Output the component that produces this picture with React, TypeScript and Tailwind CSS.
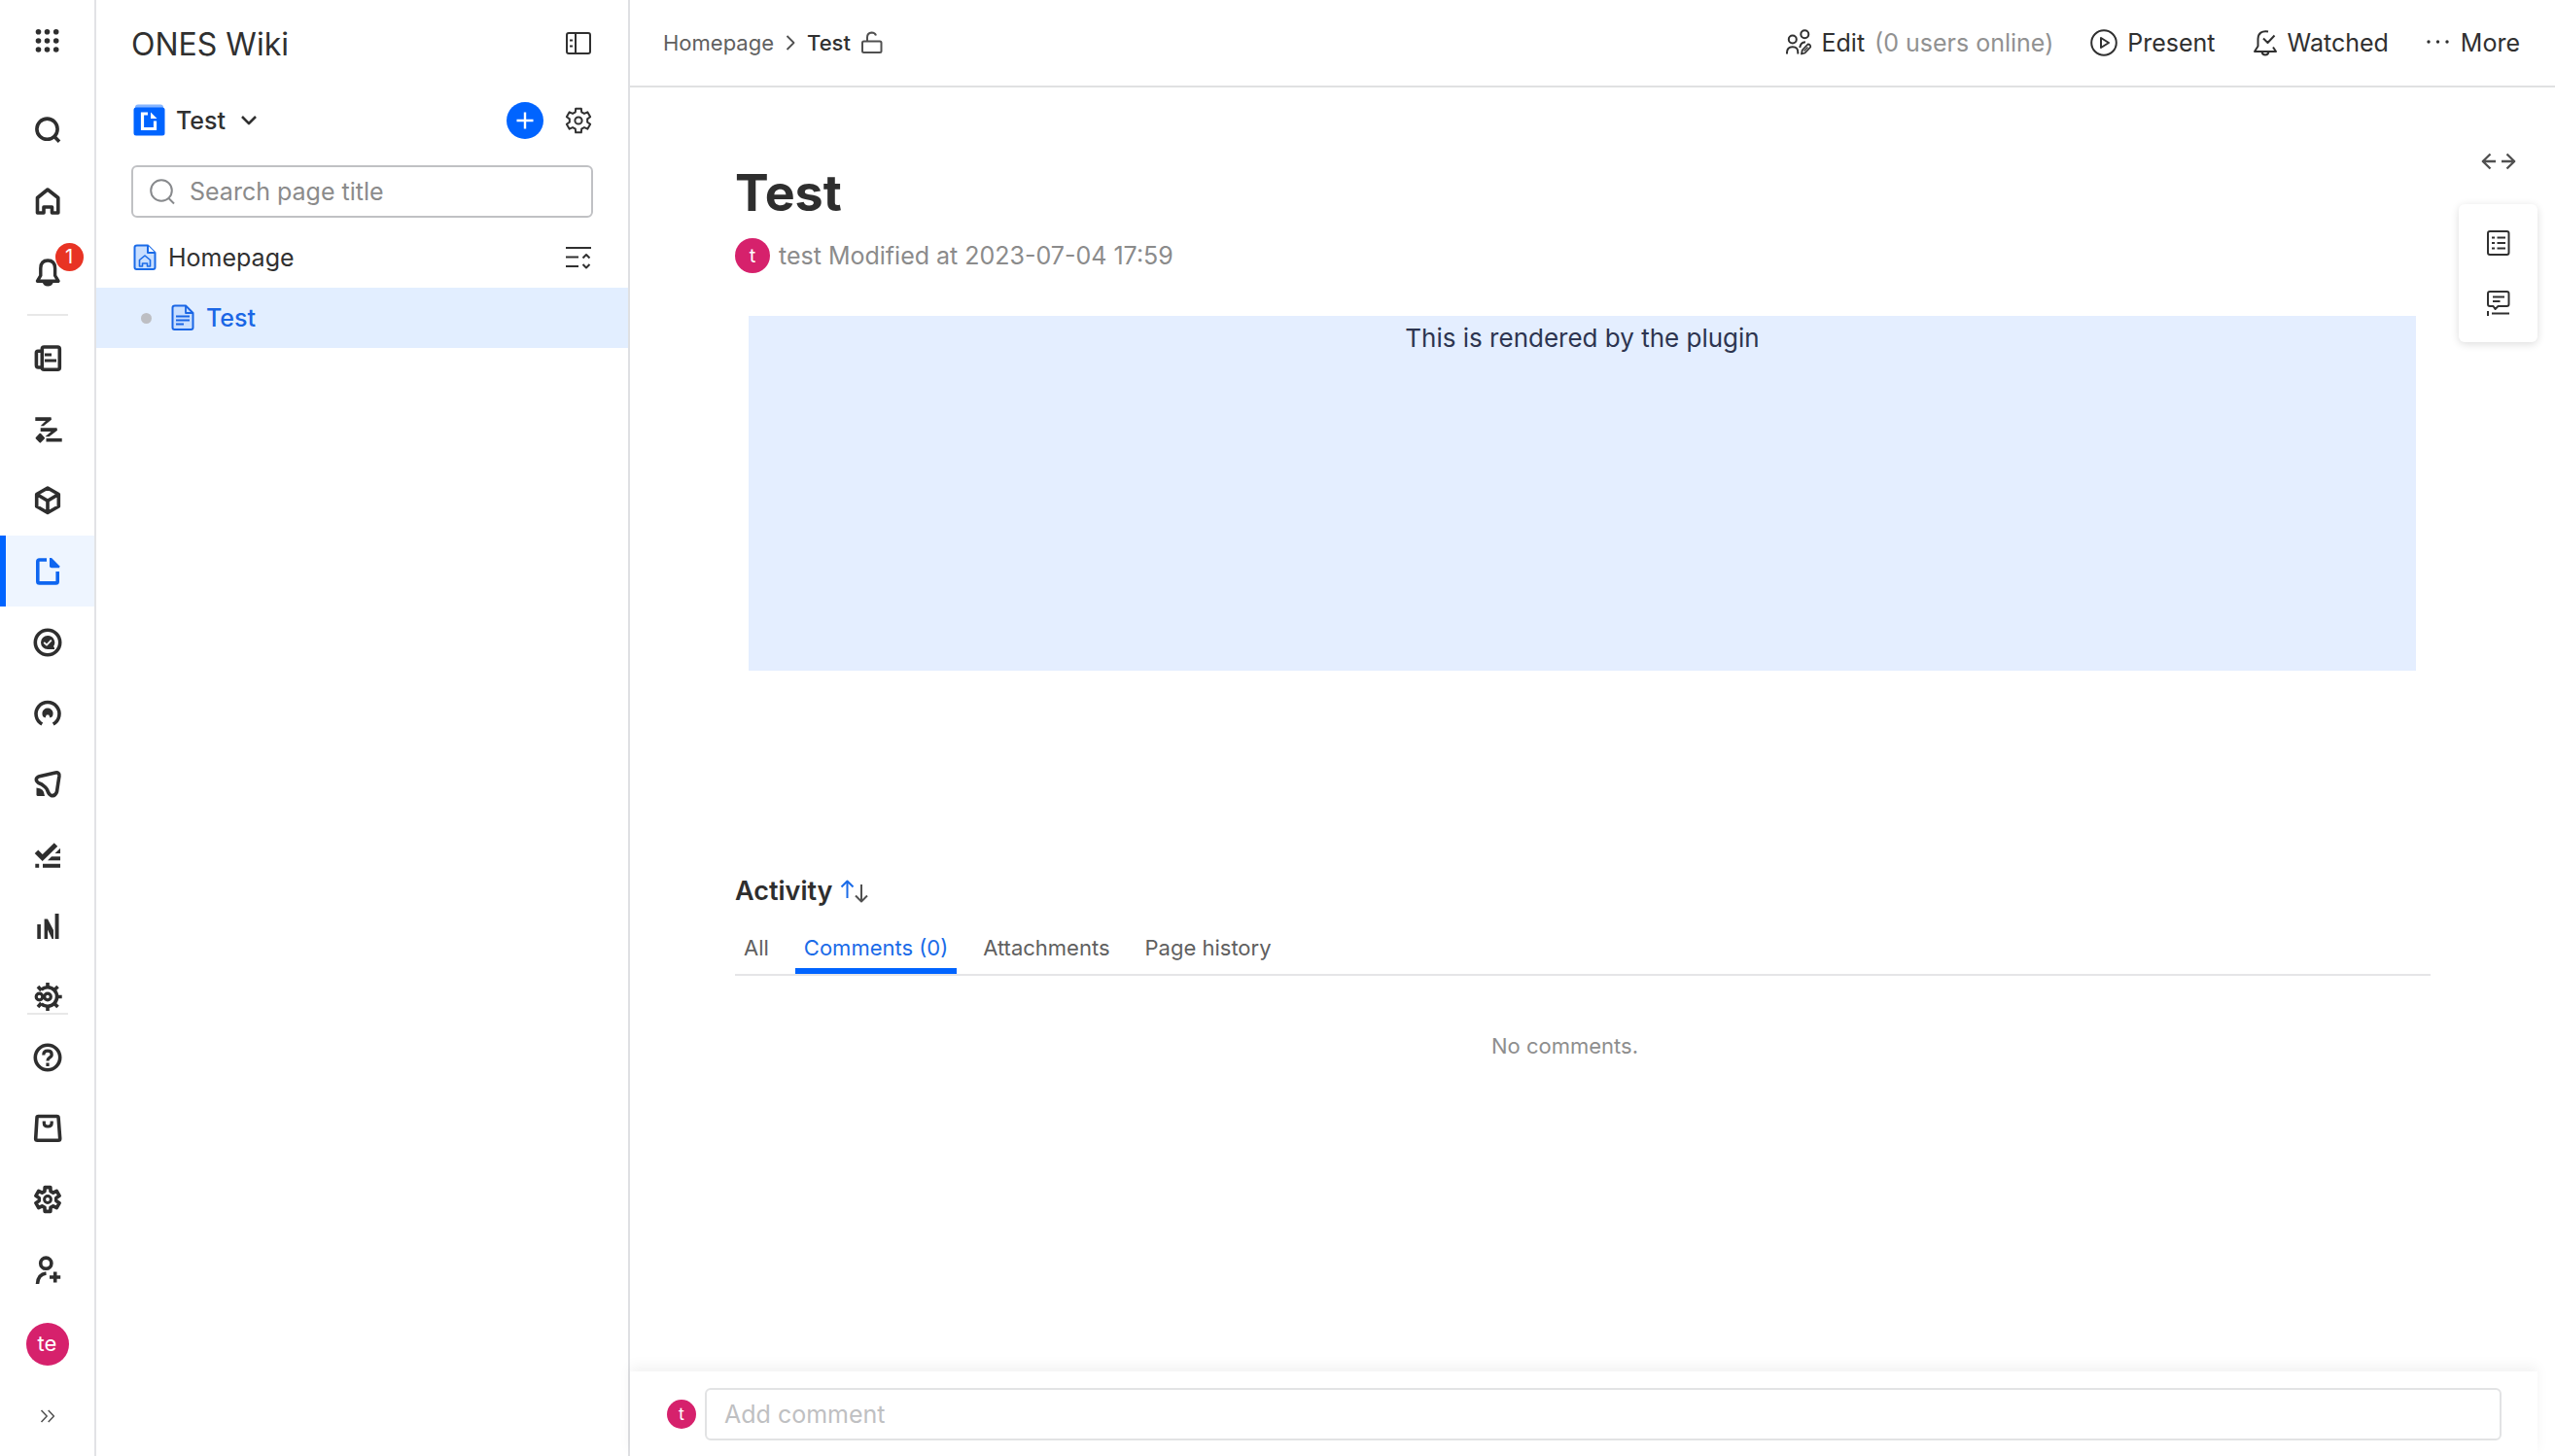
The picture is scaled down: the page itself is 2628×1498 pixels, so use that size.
import React from "react";

type IconProps = { children: React.ReactNode; w?: number; h?: number; sw?: number; className?: string };

function Icon({ children, w = 32, h = 32, sw = 3.6, className }: IconProps) {
  return (
    <svg
      width={w}
      height={h}
      viewBox={`0 0 ${w} ${h}`}
      fill="none"
      stroke="currentColor"
      strokeWidth={sw}
      strokeLinejoin="round"
      aria-hidden="true"
      className={className ?? "shrink-0"}
    >
      {children}
    </svg>
  );
}

function gearPath(c: number, outer: number, inner: number) {
  const pts: string[] = [];
  for (let i = 0; i < 6; i++) {
    const mid = -90 + i * 60;
    const steps: [number, number][] = [
      [-20, inner],
      [-13, outer],
      [13, outer],
      [20, inner],
    ];
    for (const [offset, radius] of steps) {
      const a = ((mid + offset) * Math.PI) / 180;
      pts.push(`${(c + radius * Math.cos(a)).toFixed(2)} ${(c + radius * Math.sin(a)).toFixed(2)}`);
    }
  }
  return `M${pts.join("L")}Z`;
}

const solid = { fill: "currentColor", stroke: "none" } as const;

const appIcons: { label: string; active?: boolean; art: React.ReactNode }[] = [
  {
    label: "Projects",
    art: (
      <>
        <rect x="10.3" y="4" width="18" height="23.2" rx="2" />
        <path d="M10 8.2H6Q4.4 8.2 4.4 10V22.5Q4.4 25 6.5 25H10" />
        <path d="M13 12H20M13 18H25" strokeWidth="3" />
      </>
    ),
  },
  {
    label: "Plan",
    art: (
      <>
        <path
          d="M3.3 3.3H19.5L20 5.8L11.8 12.3H8.7L14 7H3.3ZM8.7 14.2H25.5L26 16.7L17.5 23.2H13.5L19.5 18H8.7ZM14.5 25H30.7V28.6H14.5Z"
          {...solid}
        />
        <path d="M8.3 20.8L12 24.7L8.3 28.6L4.6 24.7Z" fill="currentColor" strokeWidth="2" />
      </>
    ),
  },
  {
    label: "Product",
    art: <path d="M16 3L27.3 9.5V22L16 28.5L4.7 22V9.5ZM4.7 9.5L16 16.2L27.3 9.5M16 16.2V28" />,
  },
  {
    label: "Wiki",
    active: true,
    art: (
      <>
        <path d="M15 4H7.5Q5.8 4 5.8 5.7V26.2Q5.8 27.9 7.5 27.9H24.5Q26.2 27.9 26.2 26.2V16" />
        <path d="M18 2H20L28.2 10.2V12.3H20Q18 12.3 18 10.3Z" {...solid} />
      </>
    ),
  },
  {
    label: "Test cases",
    art: (
      <>
        <circle cx="16" cy="16" r="12.7" />
        <path d="M16 9A7 7 0 1 0 16 23H23V21.5L22 20A7 7 0 0 0 16 9Z" {...solid} />
        <path d="M12.2 16L15 18.6L19.8 13.6" stroke="white" strokeWidth="1.8" />
      </>
    ),
  },
  {
    label: "Performance",
    art: (
      <>
        <path d="M10.3 27A12 12 0 1 1 21.7 27" />
        <path d="M11.5 19.5A5.6 5.6 0 1 1 20.5 19.5L18.5 20.5L17.2 17.5H14.8L13.5 20.5Z" {...solid} />
      </>
    ),
  },
  {
    label: "Desk",
    art: (
      <>
        <path d="M7.5 7.8L24 4Q28.3 3.3 27.9 7.5L25.5 23.5Q24 28.5 19.5 27.5Q17.5 26.5 16.5 24Q15 19.5 12.5 18Q10 15.5 6.5 14.5Q3 11.5 5 9.2Q6 8.2 7.5 7.8Z" />
        <path d="M4.5 19.5Q12.5 19.8 13 28H6Q4.5 28 4.5 26.5Z" {...solid} />
      </>
    ),
  },
  {
    label: "Tasks",
    art: (
      <>
        <path d="M4.5 12.2L10.7 18.5L24.5 5" strokeWidth="5" strokeLinejoin="miter" />
        <path d="M29 8.7V14H23.5ZM20 17.3H29V21.3H16ZM3.3 24.7H7.2V28.7H3.3ZM11 24.7H29V28.7H11Z" {...solid} />
      </>
    ),
  },
  {
    label: "Reports",
    art: (
      <path
        d="M5.3 14H8.9V29H5.3ZM23.6 3H27.5V29H23.6ZM12.6 8.5H16L22 20V29H20.5L16 19.5V29H12.6Z"
        {...solid}
      />
    ),
  },
  {
    label: "Automation",
    art: (
      <>
        <circle cx="7.5" cy="15.5" r="3.3" strokeWidth="3.2" />
        <circle cx="16" cy="15.5" r="3.3" strokeWidth="3.2" />
        <path d="M9.5 8.2A9.7 9.7 0 1 1 9.5 22.8" />
        <path d="M16 1V6M16 25V30M25 15.5H30.7M22.5 9L26.5 5M22.5 22L26.5 26M9.5 9L6 5M9.5 22L6 26" />
      </>
    ),
  },
];

const footerIcons: { label: string; art: React.ReactNode }[] = [
  {
    label: "Help",
    art: (
      <>
        <circle cx="16" cy="16" r="12.7" />
        <path d="M11.8 13.5Q11.8 9.2 16 9.2T20.2 13Q20.2 15 17.5 16.5Q16 17.5 16 19.5M16 21.5V25" strokeWidth="3.2" />
      </>
    ),
  },
  {
    label: "Marketplace",
    art: (
      <>
        <path d="M6.5 3.5H25.5Q27 3.5 27.1 5L28.7 26.5Q28.7 28.3 27 28.3H5.5Q3.7 28.3 3.7 26.5L5 5Q5 3.5 6.5 3.5Z" />
        <path d="M12.3 8.5V10.5Q12.3 14 16.2 14T20.2 10.5V8.5" strokeWidth="3.2" />
      </>
    ),
  },
  {
    label: "Settings",
    art: (
      <>
        <path d={gearPath(16, 12.7, 8.9)} />
        <circle cx="16" cy="16" r="3.4" strokeWidth="3" />
      </>
    ),
  },
  {
    label: "Invite member",
    art: (
      <>
        <circle cx="14.3" cy="8.7" r="5.6" />
        <path d="M5.5 30Q6 20 14.5 19M23.7 17.5V28.5M18 23H29.2" />
      </>
    ),
  },
];

function RailButton({ label, active, children }: { label: string; active?: boolean; children: React.ReactNode }) {
  return (
    <button
      type="button"
      aria-label={label}
      className={
        active
          ? "flex h-[73px] w-full shrink-0 items-center justify-center border-l-6 border-[#0064ff] bg-[#eef5ff] pr-[5px] text-[#0f66f0]"
          : "flex h-[73px] w-full shrink-0 items-center justify-center text-[#2e2e2e]"
      }
    >
      {children}
    </button>
  );
}

function Rail() {
  return (
    <nav aria-label="Applications" className="flex w-[99px] shrink-0 flex-col border-r-2 border-[#e2e3e6]">
      <button type="button" aria-label="All apps" className="mb-[13px] flex h-[84px] shrink-0 items-center justify-center text-[#2e2e2e]">
        <Icon>
          {[6.7, 16, 25].map((y) =>
            [6.5, 15.5, 24.7].map((x) => <circle key={`${x}-${y}`} cx={x} cy={y} r="2.8" {...solid} />),
          )}
        </Icon>
      </button>
      <RailButton label="Search">
        <Icon>
          <circle cx="15.5" cy="14.7" r="10.6" />
          <path d="M22.5 22L28 27.7" />
        </Icon>
      </RailButton>
      <RailButton label="Home">
        <Icon>
          <path d="M5.5 12.5L16 4L26.8 12.5V28H20.5V22H12V28H5.5Z" />
        </Icon>
      </RailButton>
      <RailButton label="Notifications">
        <span className="relative">
          <Icon>
            <path d="M5.5 25.2L8.8 19.5V12Q9 4 16.2 4T23.6 12V19.5L27 25.2Z" strokeWidth="3.4" />
            <path d="M10.5 26H22Q20.5 30.5 16.2 30.5T10.5 26Z" {...solid} />
          </Icon>
          <span className="absolute -top-3.5 left-6 flex size-[29px] items-center justify-center rounded-full bg-[#e83324] text-[20px] text-white">
            1
          </span>
        </span>
      </RailButton>
      <hr className="mx-auto my-[7px] w-[42px] shrink-0 border-t-2 border-[#e8e8e8]" />
      <div className="min-h-0 flex-1 overflow-hidden">
        {appIcons.map((item) => (
          <RailButton key={item.label} label={item.label} active={item.active}>
            <Icon>{item.art}</Icon>
          </RailButton>
        ))}
      </div>
      <hr className="mx-auto mb-[7px] w-[42px] shrink-0 border-t-2 border-[#e8e8e8]" />
      {footerIcons.map((item) => (
        <RailButton key={item.label} label={item.label}>
          <Icon>{item.art}</Icon>
        </RailButton>
      ))}
      <button type="button" aria-label="Account" className="flex h-[79px] shrink-0 items-center justify-center">
        <span className="flex size-11 items-center justify-center rounded-full bg-[#d6216c] text-[22px] text-white">te</span>
      </button>
      <button type="button" aria-label="Expand navigation" className="mb-1.5 flex h-[70px] shrink-0 items-center justify-center text-[#555]">
        <Icon w={16} h={14} sw={1.6}>
          <path d="M1.5 1L7.2 7L1.5 13M8.7 1L14.4 7L8.7 13" />
        </Icon>
      </button>
    </nav>
  );
}

function PageTree() {
  return (
    <aside className="flex w-[549px] shrink-0 flex-col border-r-2 border-[#dfe0e3]">
      <div className="flex h-[90px] items-center justify-between px-9">
        <h1 className="pt-[2px] text-[32px] leading-[40px] text-[#303030]">ONES Wiki</h1>
        <button type="button" aria-label="Collapse sidebar" className="text-[#303030]">
          <Icon w={30} h={26} sw={2}>
            <rect x="3" y="2" width="24" height="21" rx="2" />
            <path d="M12 2V23M6 9.5H9M6 15.5H9" />
          </Icon>
        </button>
      </div>
      <div className="flex h-[68px] items-center pr-9 pl-[38px]">
        <button type="button" className="flex items-center text-[25px] leading-[34px] font-medium text-[#303030]">
          <Icon w={33} h={34} className="mr-[11px] shrink-0">
            <rect x="2" y="0.5" width="29" height="8" rx="3" fill="#86b5ff" stroke="none" />
            <rect x="0.5" y="3.5" width="32" height="29" rx="2.5" fill="#0064ff" stroke="none" />
            <path d="M15 10H9.5V25.5H22.5V17.5" stroke="#fff" strokeWidth="3.2" strokeLinejoin="miter" />
            <path d="M18 8.5L24.5 15H18Z" fill="#fff" stroke="none" />
          </Icon>
          Test
          <Icon w={18} h={12} sw={2.6} className="ml-[15px] shrink-0">
            <path d="M2 2L9 9L16 2" />
          </Icon>
        </button>
        <button type="button" aria-label="New page" className="ml-auto flex size-[38px] items-center justify-center rounded-full bg-[#0064ff] text-white">
          <Icon w={20} h={20} sw={2.4}>
            <path d="M10 1.5V18.5M1.5 10H18.5" />
          </Icon>
        </button>
        <button type="button" aria-label="Space settings" className="ml-[21px] text-[#303030]">
          <Icon w={30} h={30} sw={2}>
            <path d={gearPath(15, 12.7, 9.3)} />
            <circle cx="15" cy="15" r="3.6" />
          </Icon>
        </button>
      </div>
      <div className="mx-9 mt-3 flex h-[54px] items-center rounded-md border-2 border-[#c0c1c4] px-4 text-[#87898c]">
        <Icon w={28} h={28} sw={2}>
          <circle cx="13" cy="13" r="10.8" />
          <path d="M20.5 21L26 26.5" />
        </Icon>
        <input
          type="text"
          aria-label="Search page title"
          placeholder="Search page title"
          className="ml-[14px] min-w-0 flex-1 text-[25px] leading-[34px] outline-none placeholder:text-[#8b8b8b]"
        />
      </div>
      <div className="mt-[10px] flex h-[62px] items-center pr-9 pl-[38px]">
        <a href="#home" className="flex items-center text-[25px] leading-[34px] text-[#303030]">
          <Icon w={24} h={28} sw={2} className="mr-3 shrink-0 text-[#1a6be8]">
            <path d="M4 1.5H15L22.5 9V24Q22.5 26 20.5 26H3.5Q1.5 26 1.5 24V3.5Q1.5 1.5 4 1.5Z" fill="#c9dfff" />
            <path d="M15 1.5V9H22.5" fill="#fff" />
            <path d="M6.5 16.5L12 12L17.5 16.5V23H14.5V20H9.5V23H6.5Z" strokeWidth="1.6" />
          </Icon>
          Homepage
        </a>
        <button type="button" aria-label="Collapse all" className="ml-auto text-[#303030]">
          <Icon w={30} h={26} sw={2.2}>
            <path d="M2 3H28M2 12.5H15M2 22H15" />
            <path d="M19.5 13.5L23 10L26.5 13.5M19.5 20L23 23.5L26.5 20" strokeWidth="2" />
          </Icon>
        </button>
      </div>
      <a href="#test" aria-current="page" className="flex h-[62px] items-center bg-[#e2eeff] pl-[46px] text-[25px] leading-[34px] font-medium text-[#1a66e5]">
        <span className="mr-5 size-[11px] rounded-full bg-[#bdbec3]" />
        <Icon w={24} h={28} sw={2} className="mr-3 shrink-0">
          <path d="M4 1.5H15L22.5 9V24Q22.5 26 20.5 26H3.5Q1.5 26 1.5 24V3.5Q1.5 1.5 4 1.5Z" fill="#c9dfff" />
          <path d="M15 1.5V9H22.5M5 12.5H19M5 16.5H19M5 20.5H13" strokeWidth="1.8" />
        </Icon>
        Test
      </a>
    </aside>
  );
}

function Header() {
  return (
    <header className="flex h-[90px] shrink-0 items-center border-b-2 border-[#e0e1e2] pr-9 pl-[34px]">
      <nav aria-label="Breadcrumb" className="flex items-center text-[22px] leading-[30px]">
        <a href="#home" className="text-[#606060]">Homepage</a>
        <Icon w={10} h={16} sw={1.8} className="mx-3 shrink-0 text-[#505050]">
          <path d="M1.5 1L8.5 8L1.5 15" />
        </Icon>
        <span className="font-medium text-[#303030]">Test</span>
        <button type="button" aria-label="Page permissions" className="ml-[10px] text-[#505050]">
          <Icon w={24} h={24} sw={2}>
            <rect x="2" y="10.5" width="19.5" height="11.5" rx="1.5" />
            <path d="M7 10.5V6.5Q7 2 11.5 1.5Q15 1.5 16 4.5" />
          </Icon>
        </button>
      </nav>
      <div className="ml-auto flex items-center gap-[38px] text-[25px] leading-[34px] text-[#303030]">
        <button type="button" className="flex items-center">
          <Icon w={28} h={28} sw={2} className="mr-[10px] shrink-0">
            <circle cx="7.8" cy="10.5" r="4" />
            <circle cx="20.3" cy="5.2" r="4" />
            <path d="M2 25.5V24Q2.2 18.2 7.8 18.2T13.3 24V25.5M15.2 19Q16 13.5 21 13.2" />
            <path d="M17 25.5L17.8 21.5L23.5 15.5Q26.5 15.5 26.2 18.5L20.5 24.5Z" strokeWidth="1.8" />
            <path d="M19.5 22.5L23.5 18.5" strokeWidth="1.2" />
          </Icon>
          Edit
          <span className="ml-[10px] text-[#919191]">(0 users online)</span>
        </button>
        <button type="button" className="flex items-center">
          <Icon w={28} h={28} sw={2} className="mr-[10px] shrink-0">
            <circle cx="14" cy="14" r="12.8" />
            <path d="M11 9L19 14L11 19Z" />
          </Icon>
          Present
        </button>
        <button type="button" className="flex items-center">
          <Icon w={26} h={28} sw={2} className="mr-[10px] shrink-0">
            <path d="M16 2.5Q6 1 5.5 10V17.5L2 23H24L21 18.5M11 9.5L15.5 14L22.5 6.5M9.5 23Q10 26.5 13 26.5T16.5 23" />
          </Icon>
          Watched
        </button>
        <button type="button" className="flex items-center">
          <Icon w={26} h={6} className="mr-[10px] shrink-0">
            <circle cx="3" cy="2" r="1.7" {...solid} />
            <circle cx="12.5" cy="2" r="1.7" {...solid} />
            <circle cx="22" cy="2" r="1.7" {...solid} />
          </Icon>
          More
        </button>
      </div>
    </header>
  );
}

const tabs = ["All", "Comments (0)", "Attachments", "Page history"];

function Activity() {
  return (
    <section className="mt-[205px]">
      <div className="flex items-center">
        <h3 className="text-[27px] leading-[44px] font-semibold text-[#2e2e2e]">Activity</h3>
        <button type="button" aria-label="Change sort order" className="ml-2">
          <Icon w={30} h={26} sw={2} className="shrink-0">
            <path d="M7.5 20V3M1.5 8.5L7.5 2.5L13.5 8.5" stroke="#1a6be8" />
            <path d="M22 6V23M16 17.5L22 23.5L28 17.5" stroke="#505050" />
          </Icon>
        </button>
      </div>
      <div role="tablist" className="mt-[9px] flex gap-[18px] border-b-2 border-[#e5e5e7] text-[22px] leading-[30px] text-[#606060]">
        {tabs.map((tab) => (
          <button
            key={tab}
            type="button"
            role="tab"
            aria-selected={tab === "Comments (0)"}
            className={
              tab === "Comments (0)"
                ? "h-[54px] border-b-6 border-[#0064ff] px-[9px] pt-[6px] text-[#1a6be8]"
                : "h-[54px] border-b-6 border-transparent px-[9px] pt-[6px]"
            }
          >
            {tab}
          </button>
        ))}
      </div>
      <p className="mt-[57px] pr-[37px] text-center text-[22px] leading-[30px] text-[#8e8e8e]">No comments.</p>
    </section>
  );
}

export default function App() {
  return (
    <div className="flex h-screen w-full overflow-hidden bg-white font-['Inter',sans-serif]">
      <Rail />
      <PageTree />
      <div className="flex min-w-0 flex-1 flex-col">
        <Header />
        <div className="flex min-h-0 flex-1 overflow-hidden">
          <main className="min-w-0 flex-1 pt-[76px] pl-[108px]">
            <h2 className="text-[52px] leading-[66px] font-bold text-[#2e2e2e]">Test</h2>
            <div className="mt-[13px] flex items-center text-[25px] leading-[36px] text-[#8b8b8b]">
              <span className="mr-[9px] flex size-9 items-center justify-center rounded-full bg-[#d6216c] text-[20px] text-white">t</span>
              test Modified at 2023-07-04 17:59
            </div>
            <div className="mt-11 mr-[15px] ml-[14px] h-[365px] bg-[#e4eeff] pt-[5px] text-center text-[26px] leading-[36px] text-[#2d3550]">
              This is rendered by the plugin
            </div>
            <Activity />
          </main>
          <aside aria-label="Page tools" className="flex w-[128px] shrink-0 flex-col items-center pt-[62px] pr-[18px] pl-[29px]">
            <button type="button" aria-label="Toggle page width" className="text-[#505050]">
              <Icon w={38} h={28} sw={2.4}>
                <path d="M16 14H2.5M10.5 6.5L2.8 14L10.5 21.5M22 14H35.5M27.5 6.5L35.2 14L27.5 21.5" />
              </Icon>
            </button>
            <div className="mt-[30px] flex h-[142px] w-full flex-col items-center justify-center gap-[34px] rounded-md bg-white text-[#303030] shadow-[0_2px_8px_rgba(0,0,0,0.14)]">
              <button type="button" aria-label="Outline">
                <Icon w={26} h={28} sw={2}>
                  <rect x="2" y="2" width="21.5" height="24" rx="2" />
                  <path d="M6 8.5H9M11.5 8.5H20M6 14H9M11.5 14H20M6 19.5H9M11.5 19.5H20" />
                </Icon>
              </button>
              <button type="button" aria-label="Page comments">
                <Icon w={26} h={28} sw={2}>
                  <path d="M4 2H21.5Q23.5 2 23.5 4V15Q23.5 17 21.5 17H12.5L9.5 20L7.5 17H4Q2 17 2 15V4Q2 2 4 2Z" />
                  <path d="M7 7.5H19M7 12H14.5M2 22V27M6 24.5H24" />
                </Icon>
              </button>
            </div>
          </aside>
        </div>
        <form className="mr-[18px] flex h-[87px] shrink-0 items-center bg-white pr-[37px] pl-[38px] shadow-[0_-6px_12px_rgba(0,0,0,0.05)]">
          <span className="mr-[9px] flex size-[30px] items-center justify-center rounded-full bg-[#d6216c] text-[18px] text-white">t</span>
          <input
            type="text"
            aria-label="Add comment"
            placeholder="Add comment"
            className="h-[54px] min-w-0 flex-1 rounded-md border-2 border-[#e2e3e4] px-[18px] text-[25px] leading-[34px] outline-none placeholder:text-[#bfc0c2]"
          />
        </form>
      </div>
    </div>
  );
}
